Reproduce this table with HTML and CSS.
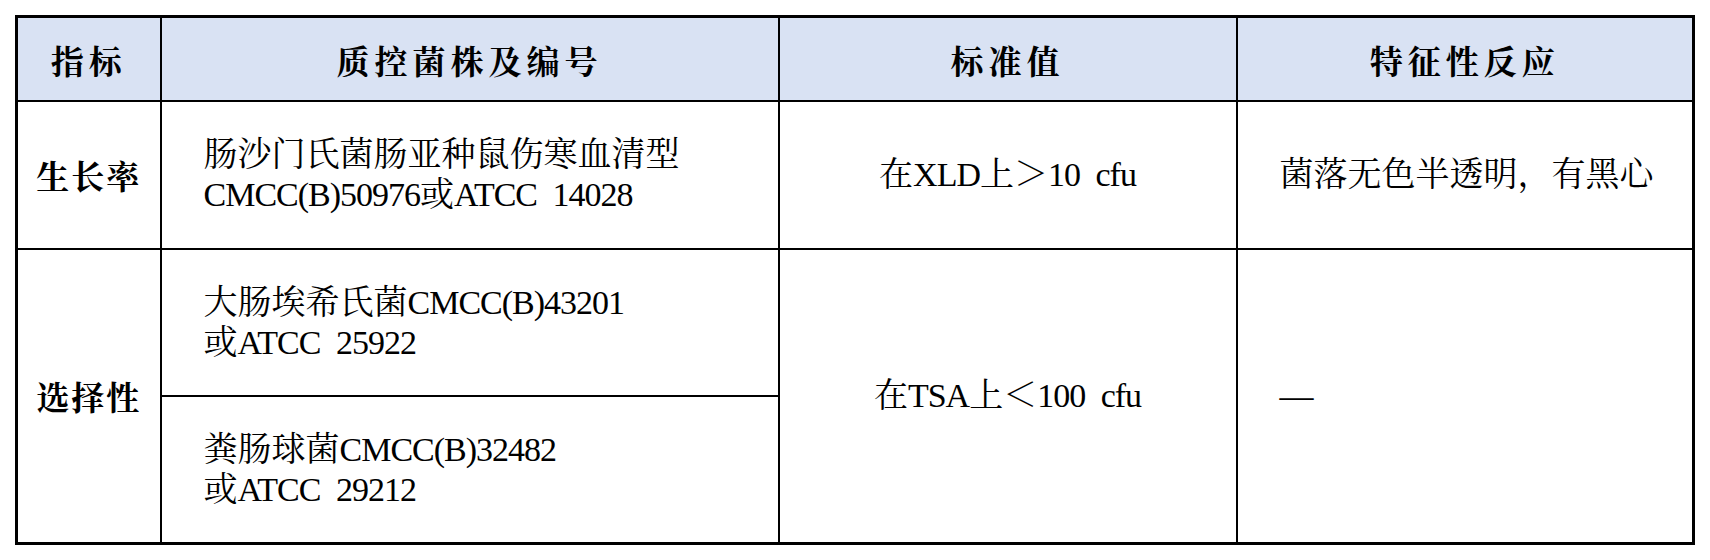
FILE: index.html
```html
<!DOCTYPE html>
<html lang="zh-CN">
<head>
<meta charset="utf-8">
<title>质控菌株</title>
<link rel="stylesheet" href="styles.css">
</head>
<body>
<table class="qc">
  <colgroup>
    <col class="c1"><col class="c2"><col class="c3"><col class="c4">
  </colgroup>
  <thead>
    <tr class="head">
      <th>指标</th>
      <th>质控菌株及编号</th>
      <th>标准值</th>
      <th>特征性反应</th>
    </tr>
  </thead>
  <tbody>
    <tr class="r1">
      <td class="name">生长率</td>
      <td class="strain">肠沙门氏菌肠亚种鼠伤寒血清型<br><span class="lat">CMCC(B)50976</span>或<span class="lat">ATCC 14028</span></td>
      <td class="std">在<span class="lat">XLD</span>上＞<span class="lat">10 cfu</span></td>
      <td class="resp">菌落无色半透明，有黑心</td>
    </tr>
    <tr class="r2">
      <td class="name" rowspan="2">选择性</td>
      <td class="strain">大肠埃希氏菌<span class="lat">CMCC(B)43201</span><br>或<span class="lat">ATCC 25922</span></td>
      <td class="std" rowspan="2">在<span class="lat">TSA</span>上＜<span class="lat">100 cfu</span></td>
      <td class="resp" rowspan="2">—</td>
    </tr>
    <tr class="r3">
      <td class="strain">粪肠球菌<span class="lat">CMCC(B)32482</span><br>或<span class="lat">ATCC 29212</span></td>
    </tr>
  </tbody>
</table>
</body>
</html>
```
FILE: styles.css
```css
html, body {
  margin: 0;
  padding: 0;
  background: #ffffff;
}
body {
  padding: 15px 0 0 15px;
  font-family: "Liberation Serif", "Noto Serif CJK SC", "Noto Sans CJK SC", serif;
  color: #000;
}
.qc {
  border-collapse: collapse;
  table-layout: fixed;
  width: 1679px;
  border: 3px solid #000;
}
.c1 { width: 144px; }
.c2 { width: 618px; }
.c3 { width: 458px; }
.c4 { width: 457px; }
.qc th, .qc td {
  border: 2px solid #000;
  padding: 0;
  vertical-align: middle;
}
.head th {
  height: 82px;
  background: #d9e2f3;
  font-family: "Noto Serif CJK SC", "Noto Sans CJK SC", sans-serif;
  font-weight: 700;
  font-size: 33px;
  letter-spacing: 5px;
  text-align: center;
}
.qc td {
  font-size: 34px;
  font-weight: 400;
  letter-spacing: 0;
  word-spacing: 8px;
  line-height: 40px;
}
.lat {
  letter-spacing: -1px;
}
.r1 td { height: 146px; }
.r2 td.strain, .r3 td.strain { height: 145px; }
.qc td.name {
  text-align: center;
  font-family: "Noto Serif CJK SC", "Noto Sans CJK SC", sans-serif;
  font-weight: 700;
  font-size: 33px;
  letter-spacing: 2px;
}
.strain {
  text-align: left;
  padding-left: 42px !important;
}
.std {
  text-align: center;
}
.resp {
  text-align: left;
  padding-left: 42px !important;
}
```
